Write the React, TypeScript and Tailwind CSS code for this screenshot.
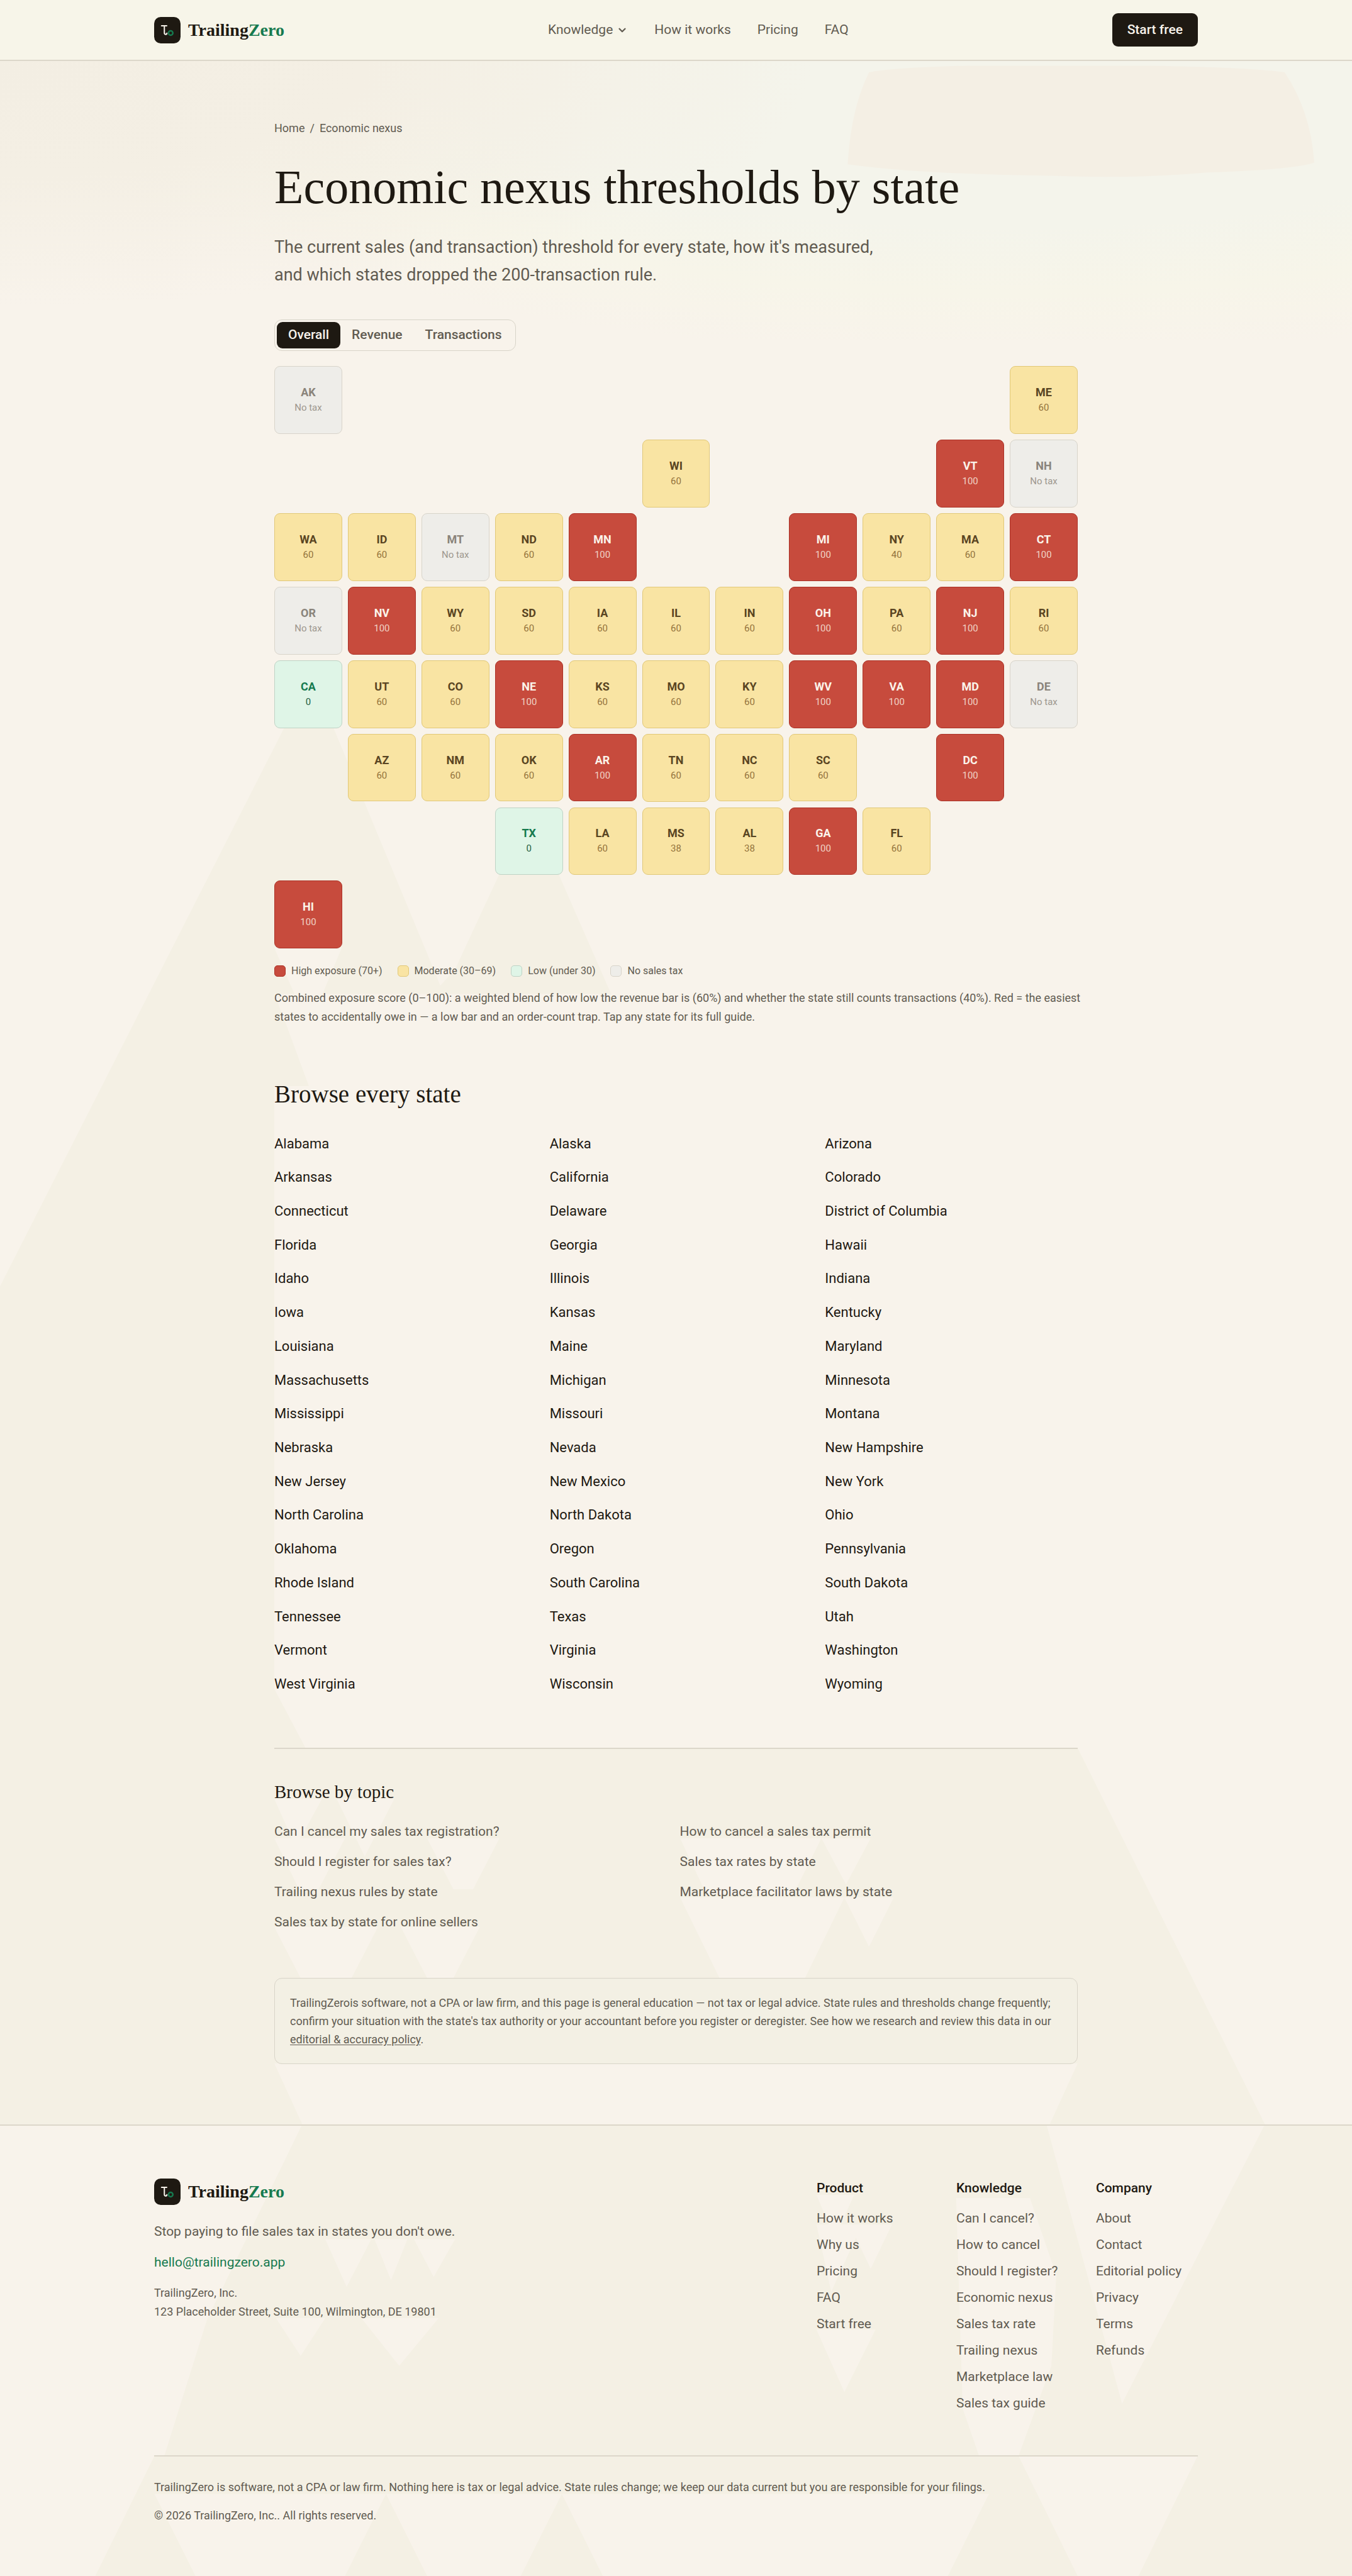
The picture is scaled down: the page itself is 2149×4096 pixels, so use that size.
import React, { useState } from "react";
import { ChevronDown } from "lucide-react";

type Level = "high" | "mod" | "low" | "none";

const tileStyles: Record<Level, string> = {
  high: "bg-[#c74b3d] border-[#ab3227] text-[#fbf4ea]",
  mod: "bg-[#f9e4a3] border-[#e1c878] text-[#5a4522]",
  low: "bg-[#dff5e7] border-[#bfd3c5] text-[#167a4f]",
  none: "bg-[#eeede9] border-[#d8d4ca] text-[#8a847b]",
};

const valueStyles: Record<Level, string> = {
  high: "text-[#f0d3c6]",
  mod: "text-[#94733c]",
  low: "text-[#1f5f42]",
  none: "text-[#9d978e]",
};

/* One string per map row; a dot is an empty cell. */
const mapRows = [
  "AK . . . . . . . . . ME",
  ". . . . . WI . . . VT NH",
  "WA ID MT ND MN . . MI NY MA CT",
  "OR NV WY SD IA IL IN OH PA NJ RI",
  "CA UT CO NE KS MO KY WV VA MD DE",
  ". AZ NM OK AR TN NC SC . DC .",
  ". . . TX LA MS AL GA FL . .",
  "HI . . . . . . . . . .",
];

const highStates = ["VT", "MN", "MI", "CT", "NV", "OH", "NJ", "NE", "WV", "VA", "MD", "AR", "DC", "GA", "HI"];
const noTaxStates = ["AK", "NH", "MT", "OR", "DE"];
const lowStates = ["CA", "TX"];
const specialScores: Record<string, string> = { NY: "40", MS: "38", AL: "38" };

function levelOf(code: string): Level {
  if (highStates.includes(code)) return "high";
  if (noTaxStates.includes(code)) return "none";
  if (lowStates.includes(code)) return "low";
  return "mod";
}

function scoreOf(code: string): string {
  const level = levelOf(code);
  if (level === "high") return "100";
  if (level === "none") return "No tax";
  if (level === "low") return "0";
  return specialScores[code] ?? "60";
}

const states = [
  "Alabama", "Alaska", "Arizona", "Arkansas", "California", "Colorado", "Connecticut", "Delaware",
  "District of Columbia", "Florida", "Georgia", "Hawaii", "Idaho", "Illinois", "Indiana", "Iowa", "Kansas",
  "Kentucky", "Louisiana", "Maine", "Maryland", "Massachusetts", "Michigan", "Minnesota", "Mississippi",
  "Missouri", "Montana", "Nebraska", "Nevada", "New Hampshire", "New Jersey", "New Mexico", "New York",
  "North Carolina", "North Dakota", "Ohio", "Oklahoma", "Oregon", "Pennsylvania", "Rhode Island",
  "South Carolina", "South Dakota", "Tennessee", "Texas", "Utah", "Vermont", "Virginia", "Washington",
  "West Virginia", "Wisconsin", "Wyoming",
];

const topics = [
  "Can I cancel my sales tax registration?",
  "How to cancel a sales tax permit",
  "Should I register for sales tax?",
  "Sales tax rates by state",
  "Trailing nexus rules by state",
  "Marketplace facilitator laws by state",
  "Sales tax by state for online sellers",
];

const footerColumns = [
  { title: "Product", links: ["How it works", "Why us", "Pricing", "FAQ", "Start free"] },
  {
    title: "Knowledge",
    links: ["Can I cancel?", "How to cancel", "Should I register?", "Economic nexus", "Sales tax rate", "Trailing nexus", "Marketplace law", "Sales tax guide"],
  },
  { title: "Company", links: ["About", "Contact", "Editorial policy", "Privacy", "Terms", "Refunds"] },
];

const legend: { level: Level; label: string }[] = [
  { level: "high", label: "High exposure (70+)" },
  { level: "mod", label: "Moderate (30–69)" },
  { level: "low", label: "Low (under 30)" },
  { level: "none", label: "No sales tax" },
];

function Brand() {
  return (
    <a href="#home" className="flex items-center gap-3">
      <svg viewBox="0 0 168 168" className="size-[42px]" aria-hidden="true">
        <rect width="168" height="168" rx="42" fill="#1e1912" />
        <path d="M47 56H80M65 56V100Q65 111 74 111Q81 111 81 103" fill="none" stroke="#f8f3eb" strokeWidth="8" strokeLinecap="round" />
        <circle cx="105" cy="102" r="14" fill="none" stroke="#167a4f" strokeWidth="10" />
      </svg>
      <span className="font-['Liberation_Serif',serif] text-[28px] leading-[34px] font-bold">
        Trailing<span className="text-[#167a4f]">Zero</span>
      </span>
    </a>
  );
}

function Backdrop() {
  return (
    <div aria-hidden="true" className="pointer-events-none absolute inset-0 -z-10 overflow-hidden">
      <div className="absolute inset-x-0 top-0 h-[540px] bg-[radial-gradient(ellipse_60%_70%_at_0%_20%,#f3eee3_0%,#f4efe4_45%,transparent_100%),radial-gradient(ellipse_75%_95%_at_75%_10%,#f4f4eb_0%,#f4f4eb_60%,#f7f5e9_80%,transparent_100%)]" />
      <svg viewBox="0 0 823 1568" preserveAspectRatio="none" className="absolute inset-0 size-full">
        <path d="M529 44Q545 41 590 40H700Q760 41 782 44Q798 68 800 99Q790 103 735 105Q690 109 640 107Q560 106 516 100Q518 66 529 44Z" fill="#f4efe4" />
        <path
          fill="#f4f0e4"
          d="M0 783L173 443H203L264 590L268 600L277 590L304 532H340L372 605H167L174 623L188 661H167V1028L186 1064H656L770 1293H0Z"
        />
        <path
          fill="#f8f3eb"
          d="M167 577H208L188 625ZM167 1256H656L639 1293H184ZM167 1173H230L214 1204H183ZM244 1173H292L276 1204H260ZM414 1155H514L490 1204H438ZM514 1155H544L529 1185ZM414 1119H500L483 1153H430ZM500 1119H530L515 1147ZM167 1119H210L194 1150H182ZM260 1119H304L288 1150H276ZM167 1095H196L180 1124ZM205 1095H240L222 1130Z"
        />
        <path fill="#f4f0e4" d="M0 1293H823V1568H0Z" />
        <path
          fill="#f8f3eb"
          d="M0 1293H184L126 1412L100 1495H94L58 1568H0ZM637 1293H770L683 1463ZM94 1518H235L210 1568H119ZM235 1518H342L317 1568H260ZM342 1518H602L577 1568H367ZM620 1495H729L693 1568H656ZM582 1338H627L643 1385L640 1440L620 1495H596L586 1466ZM497 1336H520L508 1362ZM497 1354H517L530 1354H543L530 1381L521 1362L506 1395ZM497 1418H533L514 1456ZM228 1363H248L238 1388ZM252 1363H277L264 1386ZM198 1363H226L211 1392ZM220 1411H267L243 1440ZM168 1411H198L183 1434Z"
        />
      </svg>
    </div>
  );
}

function StateTile({ code }: { code: string }) {
  const level = levelOf(code);
  return (
    <a
      href={"#" + code.toLowerCase()}
      className={`flex aspect-square flex-col items-center justify-center gap-0.5 rounded-[9px] border leading-[23px] ${tileStyles[level]}`}
    >
      <span className="text-[18px] font-bold">{code}</span>
      <span className={`text-[15px] ${valueStyles[level]}`}>{scoreOf(code)}</span>
    </a>
  );
}

function MetricToggle() {
  const [active, setActive] = useState("Overall");
  return (
    <div role="group" aria-label="Map metric" className="mt-[49px] flex w-fit rounded-xl border border-[#d8d4c8] p-[3px]">
      {["Overall", "Revenue", "Transactions"].map((name) => (
        <button
          key={name}
          type="button"
          aria-pressed={active === name}
          onClick={() => setActive(name)}
          className={`h-[42px] rounded-[9px] px-[18px] text-[21px] font-medium ${active === name ? "bg-[#1e1912] text-[#f8f3eb]" : "text-[#615b51]"}`}
        >
          {name}
        </button>
      ))}
    </div>
  );
}

export default function App() {
  return (
    <div className="relative isolate min-h-screen bg-[#f8f3eb] font-[Roboto,sans-serif] text-[#1e1912]">
      <Backdrop />

      <header className="border-b-2 border-[#dcd7ca] bg-[#f7f5e9]">
        <div className="mx-auto flex h-[95px] max-w-[1719px] items-center justify-between px-[30px]">
          <Brand />
          <nav aria-label="Main" className="flex items-center gap-[42px] text-[21px] text-[#615b51]">
            <button type="button" className="flex items-center gap-1.5">
              Knowledge
              <ChevronDown className="size-[18px]" strokeWidth={3} />
            </button>
            <a href="#how">How it works</a>
            <a href="#pricing">Pricing</a>
            <a href="#faq">FAQ</a>
          </nav>
          <a href="#start" className="rounded-[9px] bg-[#1e1912] px-6 text-[21px] leading-[53px] font-medium text-[#f8f3eb]">
            Start free
          </a>
        </div>
      </header>

      <main className="mx-auto max-w-[1337px] px-[30px] pt-[93px]">
        <nav aria-label="Breadcrumb" className="flex gap-2 text-[18px] leading-[27px] text-[#615b51]">
          <a href="#home">Home</a>
          <span>/</span>
          <span>Economic nexus</span>
        </nav>
        <h1 className="mt-[38px] font-['Liberation_Serif',serif] text-[76px] leading-[84px]">Economic nexus thresholds by state</h1>
        <p className="mt-8 text-[27px] leading-[44px] text-[#615b51]">
          The current sales (and transaction) threshold for every state, how it's measured,
          <br />
          and which states dropped the 200-transaction rule.
        </p>

        <MetricToggle />

        <div className="mt-6 grid grid-cols-11 gap-[9px]">
          {mapRows.flatMap((row, r) =>
            row.split(" ").map((code, c) => (code === "." ? <div key={`${r}-${c}`} /> : <StateTile key={code} code={code} />)),
          )}
        </div>

        <ul className="mt-6 flex gap-6 text-[16px] leading-6 text-[#615b51]">
          {legend.map(({ level, label }) => (
            <li key={level} className="flex items-center gap-[9px]">
              <span className={`size-[18px] rounded-[5px] border ${tileStyles[level]}`} />
              {label}
            </li>
          ))}
        </ul>
        <p className="mt-4 text-[18px] leading-[30px] whitespace-nowrap text-[#615b51]">
          Combined exposure score (0–100): a weighted blend of how low the revenue bar is (60%) and whether the state still counts transactions (40%). Red = the easiest
          <br />
          states to accidentally owe in — a low bar and an order-count trap. Tap any state for its full guide.
        </p>

        <section>
          <h2 className="mt-[85px] font-['Liberation_Serif',serif] text-[39px] leading-[46px]">Browse every state</h2>
          <ul className="mt-7 grid min-h-[913px] auto-rows-fr grid-cols-3 gap-x-9 text-[22px]">
            {states.map((name) => (
              <li key={name} className="flex items-center">
                <a href={"#" + name.toLowerCase().replace(/ /g, "-")}>{name}</a>
              </li>
            ))}
          </ul>
        </section>

        <section className="mt-[75px] border-t-2 border-[#dcd7ca] pt-[50px]">
          <h2 className="font-['Liberation_Serif',serif] text-[29px] leading-9">Browse by topic</h2>
          <ul className="mt-[21px] grid grid-cols-2 gap-x-3 text-[21px] leading-[48px] text-[#615b51]">
            {topics.map((topic) => (
              <li key={topic}>
                <a href="#topic">{topic}</a>
              </li>
            ))}
          </ul>
        </section>

        <p className="mt-[65px] rounded-xl border border-[#d8d4c8] bg-[#f3f0e4] p-6 text-[18px] leading-[29px] whitespace-nowrap text-[#615b51]">
          TrailingZerois software, not a CPA or law firm, and this page is general education — not tax or legal advice. State rules and thresholds change frequently;
          <br />
          confirm your situation with the state's tax authority or your accountant before you register or deregister. See how we research and review this data in our
          <br />
          <a href="#policy" className="underline underline-offset-2">editorial &amp; accuracy policy</a>.
        </p>
      </main>

      <footer className="mt-24 border-t-2 border-[#dcd7ca]">
        <div className="mx-auto max-w-[1719px] px-[30px] pt-[84px] pb-20">
          <div className="flex justify-between">
            <div>
              <Brand />
              <p className="mt-[25px] text-[21px] leading-[34px] text-[#615b51]">Stop paying to file sales tax in states you don't owe.</p>
              <a href="mailto:hello@trailingzero.app" className="mt-[17px] block text-[21px] leading-[30px] text-[#167a4f]">
                hello@trailingzero.app
              </a>
              <address className="mt-[19px] text-[18px] leading-[30px] text-[#615b51] not-italic">
                TrailingZero, Inc.
                <br />
                123 Placeholder Street, Suite 100, Wilmington, DE 19801
              </address>
            </div>
            <div className="grid grid-cols-[162px_162px_162px] gap-[60px] whitespace-nowrap">
              {footerColumns.map(({ title, links }) => (
                <nav key={title} aria-label={title}>
                  <h3 className="text-[21px] leading-[30px] font-medium">{title}</h3>
                  <ul className="mt-3 text-[21px] leading-[42px] text-[#615b51]">
                    {links.map((link) => (
                      <li key={link}>
                        <a href="#link">{link}</a>
                      </li>
                    ))}
                  </ul>
                </nav>
              ))}
            </div>
          </div>
          <div className="mt-[62px] border-t-2 border-[#dcd7ca] pt-[34px] text-[18px] leading-[30px] text-[#615b51]">
            <p>
              TrailingZero is software, not a CPA or law firm. Nothing here is tax or legal advice. State rules change; we keep our data current but you are responsible for your filings.
            </p>
            <p className="mt-[15px]">© 2026 TrailingZero, Inc.. All rights reserved.</p>
          </div>
        </div>
      </footer>
    </div>
  );
}
